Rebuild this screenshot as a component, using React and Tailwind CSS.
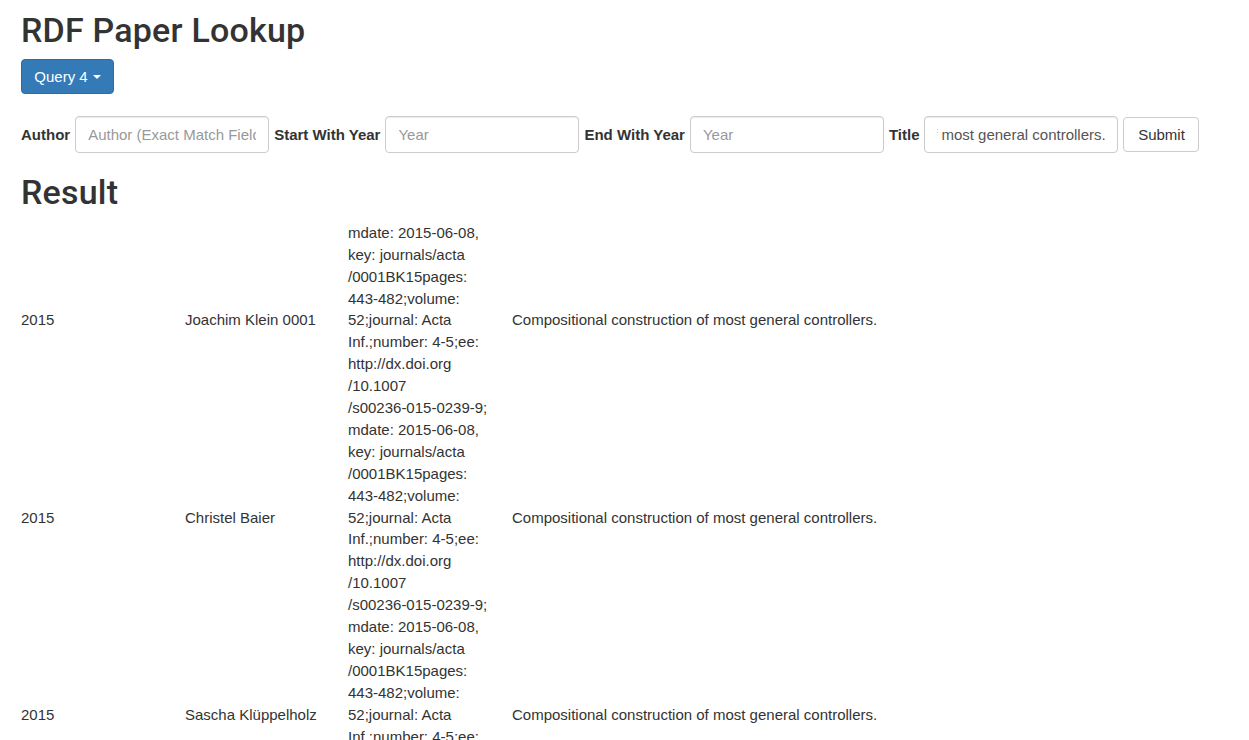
import { useEffect, useRef } from "react";

const INFO_LINES = [
  "mdate: 2015-06-08,",
  "key: journals/acta",
  "/0001BK15pages:",
  "443-482;volume:",
  "52;journal: Acta",
  "Inf.;number: 4-5;ee:",
  "http://dx.doi.org",
  "/10.1007",
  "/s00236-015-0239-9;",
];

const rows = [
  { year: "2015", author: "Joachim Klein 0001", title: "Compositional construction of most general controllers." },
  { year: "2015", author: "Christel Baier", title: "Compositional construction of most general controllers." },
  { year: "2015", author: "Sascha Klüppelholz", title: "Compositional construction of most general controllers." },
];

const inputCls =
  "h-[37px] w-[194px] rounded-[4px] border border-[#ccc] bg-white px-[12px] text-[15px] text-[#555] placeholder:text-[#999] shadow-[inset_0_1px_1px_rgba(0,0,0,0.075)] outline-none";

const Field = ({ label, placeholder, inputRef, defaultValue }) => (
  <>
    <label className="text-[15px] font-bold text-[#333]">{label}</label>
    <input ref={inputRef} className={inputCls} placeholder={placeholder} defaultValue={defaultValue} />
  </>
);

export default function App() {
  const titleRef = useRef(null);

  useEffect(() => {
    // the title field shows the end of its value, like after typing
    const el = titleRef.current;
    if (el) el.scrollLeft = el.scrollWidth;
  }, []);

  return (
    <div className="min-h-screen bg-white pl-[21px] pr-[15px] font-['Liberation_Sans',Arial,sans-serif] text-[#333]">
      <h1 className="mt-[12px] mb-[10px] font-['Roboto',Arial,sans-serif] text-[34px] font-medium leading-[1.1] tracking-[0.2px]">
        RDF Paper Lookup
      </h1>

      <button className="flex h-[35px] w-[93px] items-center justify-center gap-[5px] rounded-[4px] border border-[#2e6da4] bg-[#337ab7] text-[15px] text-white">
        Query 4
        <span className="inline-block h-0 w-0 border-x-[4px] border-t-[4px] border-solid border-x-transparent border-t-white" />
      </button>

      <form className="mt-[22px] flex items-center gap-[5px]" onSubmit={(e) => e.preventDefault()}>
        <Field label="Author" placeholder="Author (Exact Match Field)" />
        <Field label="Start With Year" placeholder="Year" />
        <Field label="End With Year" placeholder="Year" />
        <Field
          label="Title"
          placeholder="Title"
          inputRef={titleRef}
          defaultValue="Compositional construction of most general controllers."
        />
        <button
          type="submit"
          className="h-[35px] w-[76px] rounded-[4px] border border-[#ccc] bg-white text-[15px] text-[#333]"
        >
          Submit
        </button>
      </form>

      <h2 className="mt-[21px] mb-[10px] font-['Roboto',Arial,sans-serif] text-[34px] font-medium leading-[1.1] tracking-[0.2px]">
        Result
      </h2>

      <table className="border-collapse text-[15px] leading-[21.9px]">
        <tbody>
          {rows.map((r, i) => (
            <tr key={i}>
              <td className="w-[164px] p-0 align-middle">{r.year}</td>
              <td className="w-[163px] p-0 align-middle">{r.author}</td>
              <td className="w-[164px] p-0 align-middle">
                {INFO_LINES.map((line, j) => (
                  <div key={j} className="whitespace-nowrap">{line}</div>
                ))}
              </td>
              <td className="p-0 align-middle">{r.title}</td>
            </tr>
          ))}
        </tbody>
      </table>
    </div>
  );
}
